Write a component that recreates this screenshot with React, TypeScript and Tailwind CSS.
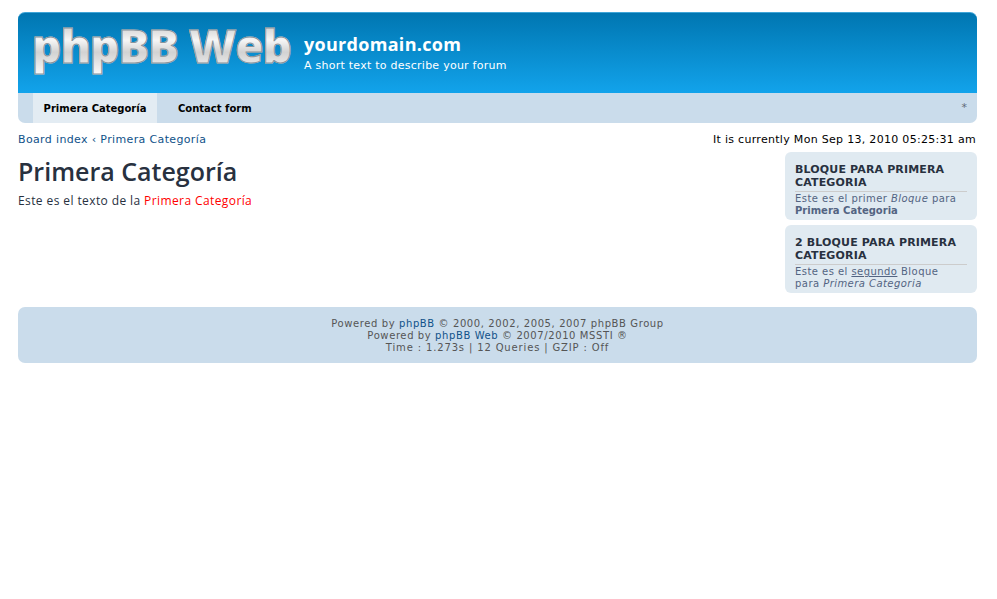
export default function App() {
  const sans = "font-['DejaVu_Sans',sans-serif]";
  return (
    <div className={`${sans} pl-[18px] pr-[20px] pt-3 bg-white min-h-[599px] text-[#000]`}>
      <header className="h-[81px] rounded-t-[7px] bg-[linear-gradient(#0076b1,#12a3eb)] border-t border-t-[#3fa5d8] flex items-start overflow-hidden">
        <div className="ml-[14px] mt-[2px] w-[258px] h-[60px] flex items-center shrink-0">
          <span className="font-['Open_Sans',sans-serif] font-extrabold text-[46px] leading-[60px] tracking-[-1.2px] whitespace-nowrap bg-[linear-gradient(#b4b4b4,#f6f6f6_42%,#d2d2d2_62%,#fbfbfb)] bg-clip-text text-transparent [-webkit-text-stroke:1px_#8a949c]">phpBB Web</span>
        </div>
        <div className="ml-[14px] mt-[19px] text-white">
          <div className="text-[18px] leading-[24px] font-bold font-['Open_Sans',sans-serif] tracking-[0.3px]">yourdomain.com</div>
          <div className="text-[11px] leading-[20px] tracking-[0.25px]">A short text to describe your forum</div>
        </div>
      </header>
      <nav className="h-[30px] bg-[#cadceb] rounded-b-[7px] flex items-stretch pl-[15px] pr-[10px] text-[10px] font-bold">
        <a className="w-[124px] bg-[#e3ecf3] flex items-center justify-center whitespace-nowrap">Primera Categoría</a>
        <a className="ml-[21px] flex items-center whitespace-nowrap">Contact form</a>
        <span className="ml-auto self-center font-normal text-[11px] text-[#5f6b78]">*</span>
      </nav>
      <div className="flex justify-between text-[11px] leading-[16px] mt-[8px] pt-px pr-px">
        <div className="text-[#105289] tracking-[0.36px]">Board index ‹ Primera Categoría</div>
        <div className="tracking-[0.3px]">It is currently Mon Sep 13, 2010 05:25:31 am</div>
      </div>
      <div className="flex justify-between">
        <main className="pt-[1px]">
          <h1 className="font-['Open_Sans',sans-serif] font-semibold text-[25px] leading-[34px] mt-[5px] text-[#28313f]">Primera Categoría</h1>
          <p className="text-[12px] leading-[16px] mt-[5px] tracking-[0.4px] text-[#28313f] font-['Open_Sans',sans-serif]">Este es el texto de la <span className="text-[#ff0000]">Primera Categoría</span></p>
        </main>
        <aside className="w-[192px] mt-[4px] flex flex-col gap-[5px]">
          <section className="bg-[#e0eaf1] rounded-[6px] h-[68px] px-[10px] pt-[11px] text-[10px] leading-[12px] tracking-[0.45px] text-[#536482]">
            <h3 className="font-bold text-[11px] leading-[13px] text-[#28313f] border-b border-b-[#ccc] pb-[2px] mb-[1px] tracking-[0.15px]">BLOQUE PARA PRIMERA CATEGORIA</h3>
            <p>Este es el primer <em>Bloque</em> para <strong className="tracking-[0px]">Primera Categoria</strong></p>
          </section>
          <section className="bg-[#e0eaf1] rounded-[6px] h-[68px] px-[10px] pt-[11px] text-[10px] leading-[12px] tracking-[0.45px] text-[#536482]">
            <h3 className="font-bold text-[11px] leading-[13px] text-[#28313f] border-b border-b-[#ccc] pb-[2px] mb-[1px] tracking-[0.15px]">2 BLOQUE PARA PRIMERA CATEGORIA</h3>
            <p>Este es el <u>segundo</u> Bloque<br />para <em>Primera Categoria</em></p>
          </section>
        </aside>
      </div>
      <footer className="mt-[14px] h-[56px] bg-[#cadceb] rounded-[7px] pt-[11px] text-center text-[10px] leading-[12px] tracking-[0.6px] text-[#555]">
        <div>Powered by <a className="text-[#105289]">phpBB</a> © 2000, 2002, 2005, 2007 phpBB Group</div>
        <div>Powered by <a className="text-[#105289]">phpBB Web</a> © 2007/2010 MSSTI ®</div>
        <div className="tracking-[0.85px]">Time : 1.273s | 12 Queries | GZIP : Off</div>
      </footer>
    </div>
  );
}
